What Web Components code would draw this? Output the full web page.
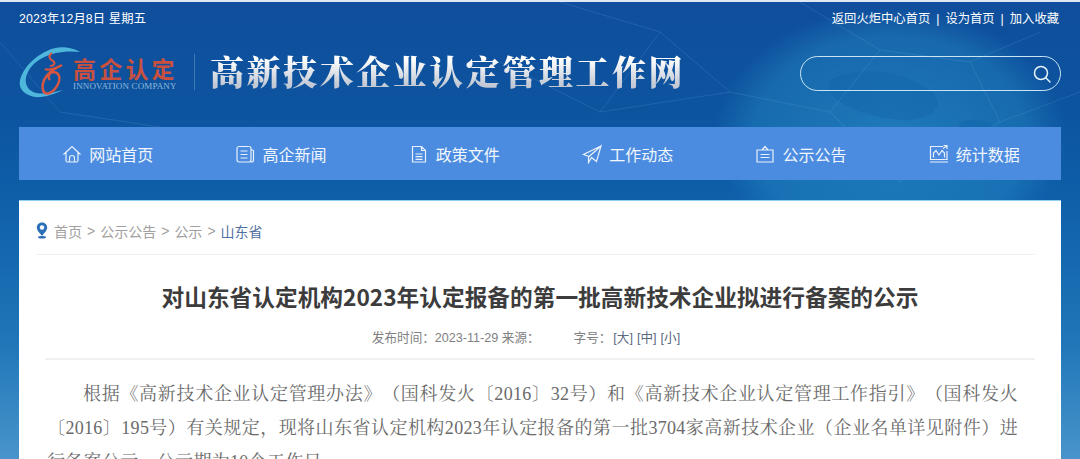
<!DOCTYPE html>
<html lang="zh-CN">
<head>
<meta charset="utf-8">
<title>高新技术企业认定管理工作网</title>
<style>
  html, body { margin: 0; padding: 0; height: 459px; overflow: hidden; }
  body { font-family: "Liberation Sans", "Noto Sans CJK SC", sans-serif; background: #1160a8; }
</style>
</head>
<body>
<site-page>
  <site-header slot="header"></site-header>
  <site-nav slot="nav"></site-nav>
  <article-card slot="card"></article-card>
</site-page>
<script>
class SitePage extends HTMLElement {
    connectedCallback() {
        this.attachShadow({ mode: 'open' });
        this.shadowRoot.innerHTML = `
            <style>
                :host {
                    display: block;
                    position: relative;
                    height: 459px;
                    overflow: hidden;
                    background: linear-gradient(180deg, #0f4e9c 0px, #0d549f 110px, #0e5ea8 190px, #1f76b8 340px, #4a95cb 459px);
                    border-top: 2px solid #dfe8f2;
                    box-sizing: border-box;
                }
                .deco { position: absolute; left: 0; top: 0; width: 1080px; height: 459px; }
                .wrap {
                    position: relative;
                    display: flex;
                    flex-direction: column;
                    padding: 0 19px;
                }
            </style>
            <svg class="deco" viewBox="0 0 1080 459" aria-hidden="true">
                <defs>
                    <radialGradient id="globe" cx="0.5" cy="0.5" r="0.5">
                        <stop offset="0" stop-color="#2d97cf" stop-opacity=".55"/>
                        <stop offset=".78" stop-color="#2790c8" stop-opacity=".38"/>
                        <stop offset="1" stop-color="#2790c8" stop-opacity="0"/>
                    </radialGradient>
                </defs>
                <ellipse cx="890" cy="135" rx="175" ry="130" fill="url(#globe)"/>
                <path d="M830 78C860 62 900 70 925 85C950 100 935 120 900 118C870 116 820 100 830 78ZM960 120C985 112 1010 125 1000 150C985 165 950 150 960 120Z" fill="#0e5ea6" fill-opacity=".28"/>
                <g stroke="#7fc0ec" stroke-opacity=".16" fill="none" stroke-width="1">
                    <path d="M800 0L880 48L970 60L1040 30M880 48L830 110L730 90L660 30M970 60L1000 120M830 110L900 180L1000 120L1080 90"/>
                    <path d="M560 0L660 30L600 110M730 90L600 110L500 60M0 40L60 110L160 125"/>
                </g>
            </svg>
            <div class="wrap">
                <slot name="header"></slot>
                <slot name="nav"></slot>
                <slot name="card"></slot>
            </div>
        `;
    }
}

class SiteHeader extends HTMLElement {
    connectedCallback() {
        this.attachShadow({ mode: 'open' });
        this.shadowRoot.innerHTML = `
            <style>
                :host { display: block; height: 125px; color: #fff; }
                .top {
                    display: flex;
                    justify-content: space-between;
                    align-items: center;
                    height: 33px;
                    font: 12.3px/16px "Liberation Sans", "Noto Sans CJK SC", sans-serif;
                }
                .date { letter-spacing: .15px; }
                .links { display: flex; gap: 6px; padding-right: 2px; }
                .main {
                    display: flex;
                    align-items: center;
                    height: 56px;
                    margin-top: 9px;
                }
                .logo { display: flex; align-items: center; width: 156px; }
                .logo svg { flex: none; width: 54px; height: 52px; overflow: visible; }
                .logo-text { display: flex; flex-direction: column; margin-top: 2px; }
                .logo-cn {
                    font: 700 23px/26px "Noto Sans CJK SC", sans-serif;
                    letter-spacing: 3.2px;
                    color: #c9503f;
                    white-space: nowrap;
                }
                .logo-en {
                    font: 9px/10px "Liberation Serif", serif;
                    letter-spacing: .13px;
                    color: #8fb8dc;
                    white-space: nowrap;
                }
                .divider { width: 1px; height: 36px; margin: 0 15px 0 19px; background: #3f7ab6; }
                h1 {
                    margin: 0 0 2px;
                    font: 900 34px/40px "Noto Serif CJK SC", "Noto Sans CJK SC", serif;
                    letter-spacing: 2.55px;
                    white-space: nowrap;
                    background: linear-gradient(180deg, #ffffff 20%, #c2c9d4 85%);
                    -webkit-background-clip: text;
                    background-clip: text;
                    color: transparent;
                }
                .search {
                    margin: 3px 0 0 auto;
                    display: flex;
                    align-items: center;
                    justify-content: flex-end;
                    box-sizing: border-box;
                    width: 261px;
                    height: 35px;
                    padding-right: 8px;
                    border: 1px solid #c8e4f5;
                    border-radius: 18px;
                }
                .search svg { width: 20px; height: 20px; }
            </style>
            <div class="top">
                <span class="date">2023年12月8日 星期五</span>
                <span class="links"><span>返回火炬中心首页</span><span>|</span><span>设为首页</span><span>|</span><span>加入收藏</span></span>
            </div>
            <div class="main">
                <div class="logo">
                    <svg viewBox="0 0 54 52" aria-hidden="true">
                        <path d="M61 6C50 0 38 0 28 5C10 13 -1 30 1 40C3 48 14 52 22 51C30 50 38 47 44 44C34 47 22 49 14 46C6 42 5 33 9 26C15 13 35 3 61 6Z" fill="#4fb6dc"/>
                        <path d="M33 7C29 10 30 13 34 15C37 17 35 20 31 20" fill="none" stroke="#d8553f" stroke-width="2"/>
                        <path d="M26 23C30 25 38 22 43 19" fill="none" stroke="#d8553f" stroke-width="2.2"/>
                        <path d="M38 22C28 26 22 36 24 44C26 50 33 48 38 40C42 33 41 27 35 26C30 26 28 31 31 34" fill="none" stroke="#d8553f" stroke-width="2.4"/>
                    </svg>
                    <div class="logo-text">
                        <span class="logo-cn">高企认定</span>
                        <span class="logo-en">INNOVATION COMPANY</span>
                    </div>
                </div>
                <div class="divider"></div>
                <h1>高新技术企业认定管理工作网</h1>
                <div class="search">
                    <svg viewBox="0 0 20 20" fill="none" stroke="#e6f3fb" stroke-width="1.5" aria-hidden="true">
                        <circle cx="9" cy="9" r="6.5"/>
                        <path d="M14 14l4 4" stroke-linecap="round"/>
                    </svg>
                </div>
            </div>
        `;
    }
}

const NAV_ICONS = {
    home: '<path d="M1.5 10.5L10 2.5L18.5 10.5M4 8.5V16.5Q4 18 5.5 18H14.5Q16 18 16 16.5V8.5M7.5 18V14Q7.5 11.5 10 11.5Q12.5 11.5 12.5 14V18"/>',
    news: '<rect x="2" y="2.5" width="14" height="15.5" rx="2"/><path d="M5.5 7h7M5.5 10.5h7M5.5 14h7M16 6h1.5q1 0 1 1v9.5q0 1.5-2.5 1.5"/>',
    file: '<path d="M3.5 2.5H12.5L16.5 6.5V18H3.5ZM12.5 2.5V6.5H16.5M6.5 10h7M6.5 12.7h7M6.5 15.3h7"/>',
    send: '<path d="M19 2L1.5 10.5L7 12.5L19 2L14.5 17.5L9.5 13.5L6.5 18.5V12.5"/>',
    board: '<path d="M2 6H18V18H2ZM7 6L10 2.5L13 6M5.5 10.5h9M5.5 13.5h9"/>',
    chart: '<path d="M14 2.5H1.5V15.5H18V7M1 18H19M4.5 13.5V9L7 6.5L10 11L13 6.5L15.5 9V13.5M14 4.5L17.5 2M18 5V1.5H14.5"/>'
};

class NavItem extends HTMLElement {
    connectedCallback() {
        const icon = NAV_ICONS[this.getAttribute('icon')];
        this.attachShadow({ mode: 'open' });
        this.shadowRoot.innerHTML = `
            <style>
                :host { display: flex; align-items: center; justify-content: center; gap: 7px; flex: 1; }
                svg { width: 20px; height: 20px; }
                span { font: 16px/20px "Noto Sans CJK SC", sans-serif; color: #f2f7fd; white-space: nowrap; }
            </style>
            <svg viewBox="0 0 20 20" fill="none" stroke="#e8f1fb" stroke-width="1.2" aria-hidden="true">${icon}</svg>
            <span><slot></slot></span>
        `;
    }
}

class SiteNav extends HTMLElement {
    connectedCallback() {
        this.attachShadow({ mode: 'open' });
        this.shadowRoot.innerHTML = `
            <style>
                :host {
                    display: flex;
                    height: 53px;
                    padding-left: 2px;
                    background: #4c8ce0;
                }
            </style>
            <slot></slot>
        `;
        this.innerHTML = `
            <nav-item icon="home">网站首页</nav-item>
            <nav-item icon="news">高企新闻</nav-item>
            <nav-item icon="file">政策文件</nav-item>
            <nav-item icon="send">工作动态</nav-item>
            <nav-item icon="board">公示公告</nav-item>
            <nav-item icon="chart">统计数据</nav-item>
        `;
    }
}

class ArticleCard extends HTMLElement {
    connectedCallback() {
        this.attachShadow({ mode: 'open' });
        this.shadowRoot.innerHTML = `
            <style>
                :host {
                    display: block;
                    margin-top: 20px;
                    height: 300px;
                    background: #fff;
                    border-top: 1px solid #8fd0ee;
                    box-sizing: border-box;
                    padding: 0 26px;
                    font-family: "Liberation Sans", "Noto Sans CJK SC", sans-serif;
                }
                .crumb {
                    display: flex;
                    align-items: center;
                    gap: 5px;
                    box-sizing: border-box;
                    height: 54px;
                    margin: 0 0 0 -9px;
                    padding-top: 6px;
                    border-bottom: 1px solid #f0f0f0;
                    font-size: 14px;
                    color: #a0a0a0;
                }
                .crumb svg { width: 12px; height: 17px; margin-right: 1px; }
                .crumb b { font-weight: 400; color: #4f6f9f; }
                h2 {
                    margin: 27px 0 0;
                    text-align: center;
                    font: 700 22.7px/30px "Noto Sans CJK SC", sans-serif;
                    color: #3c3c3c;
                }
                .meta {
                    display: flex;
                    justify-content: center;
                    box-sizing: border-box;
                    height: 33px;
                    margin-top: 15px;
                    padding: 2px 24px 0 0;
                    font-size: 12.6px;
                    line-height: 18px;
                    color: #808080;
                    border-bottom: 2px solid #f1f1f1;
                }
                .meta .gap { width: 34px; }
                .meta .size { margin-right: 2px; }
                .meta a { color: #5a6a80; margin-right: 4px; }
                p {
                    margin: 17px 17px 0 2px;
                    font: 400 18px/34px "Liberation Serif", "Noto Serif CJK SC", "Noto Sans CJK SC", serif;
                    color: #6a6a6a;
                    text-indent: 36px;
                    text-align: justify;
                    text-spacing-trim: space-all;
                    letter-spacing: 0.3px;
                }
            </style>
            <div class="crumb">
                <svg viewBox="0 0 12 17" aria-hidden="true">
                    <path d="M6 0.5C2.8 0.5 .8 3 .8 5.6C.8 8.8 4.2 11.6 6 14C7.8 11.6 11.2 8.8 11.2 5.6C11.2 3 9.2 .5 6 .5Z" fill="#2a6fb8"/>
                    <circle cx="6" cy="5.5" r="2.2" fill="#fff"/>
                    <ellipse cx="6" cy="15.2" rx="4" ry="1.3" fill="#2a6fb8"/>
                </svg>
                <span>首页</span><span>&gt;</span><span>公示公告</span><span>&gt;</span><span>公示</span><span>&gt;</span><b>山东省</b>
            </div>
            <h2>对山东省认定机构2023年认定报备的第一批高新技术企业拟进行备案的公示</h2>
            <div class="meta">
                <span>发布时间：2023-11-29 来源：</span><span class="gap"></span>
                <span class="size">字号：</span><a>[大]</a><a>[中]</a><a>[小]</a>
            </div>
            <p>根据《高新技术企业认定管理办法》（国科发火〔2016〕32号）和《高新技术企业认定管理工作指引》（国科发火〔2016〕195号）有关规定，现将山东省认定机构2023年认定报备的第一批3704家高新技术企业（企业名单详见附件）进行备案公示，公示期为10个工作日。</p>
        `;
    }
}

customElements.define('site-page', SitePage);
customElements.define('site-header', SiteHeader);
customElements.define('nav-item', NavItem);
customElements.define('site-nav', SiteNav);
customElements.define('article-card', ArticleCard);
</script>
</body>
</html>
